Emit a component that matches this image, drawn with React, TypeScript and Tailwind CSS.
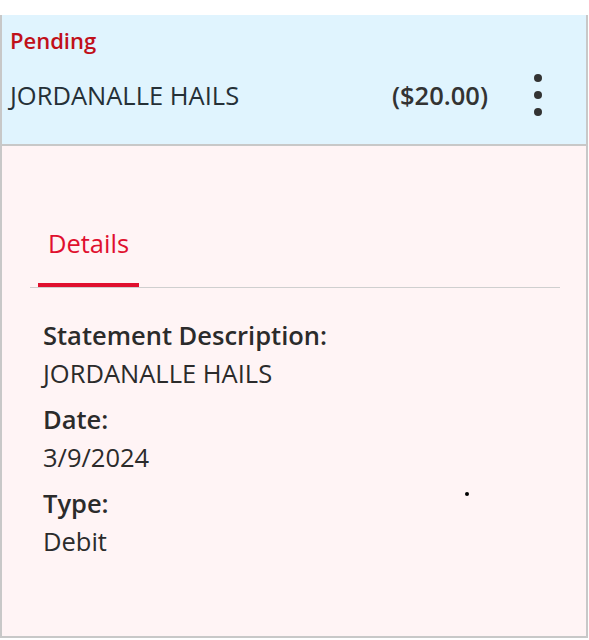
import React from 'react';

const font = { fontFamily: '"Open Sans", "Noto Sans", sans-serif' };

const DetailRow: React.FC<{ label: string; value: string }> = ({ label, value }) => (
    <div className="mb-[8px]">
        <div className="text-[25.5px] leading-[38px] font-semibold text-[#2b2b2b]">{label}</div>
        <div className="text-[25.5px] leading-[38px] text-[#2b2b2b]">{value}</div>
    </div>
);

const App: React.FC = () => {
    return (
        <div className="w-[589px] h-[640px] bg-white pt-[15px]" style={font}>
            <div className="w-[588px] h-[623px] border-2 border-[#c8c8c8] border-t-0 flex flex-col">
                <div className="h-[131px] bg-[#e0f4fe] border-b-2 border-[#c8c8c8] pl-[8px] pr-[44px] pt-[10px]">
                    <div className="text-[22px] leading-[30px] font-semibold text-[#c0101a]">Pending</div>
                    <div className="flex items-center mt-[19px]">
                        <div className="flex-1 text-[25.5px] leading-[34px] text-[#253037]">JORDANALLE HAILS</div>
                        <div className="text-[25.5px] leading-[34px] font-semibold text-[#333]">($20.00)</div>
                        <div className="ml-[46px] flex flex-col gap-[9px]">
                            <span className="block w-[8px] h-[8px] rounded-full bg-[#333]" />
                            <span className="block w-[8px] h-[8px] rounded-full bg-[#333]" />
                            <span className="block w-[8px] h-[8px] rounded-full bg-[#333]" />
                        </div>
                    </div>
                </div>
                <div className="flex-1 bg-[#fff4f5] pl-[28px] pr-[26px]">
                    <div className="mt-[78px] border-b border-[#cfcfcf] h-[64px] flex items-end">
                        <div className="ml-[8px] w-[101px] h-[64px] border-b-[4px] border-[#e0102e] flex items-start justify-center pt-[3px]">
                            <span className="text-[25.5px] leading-[34px] text-[#e0102e]">Details</span>
                        </div>
                    </div>
                    <div className="pl-[13px] pt-[28px] relative">
                        <DetailRow label="Statement Description:" value="JORDANALLE HAILS" />
                        <DetailRow label="Date:" value="3/9/2024" />
                        <DetailRow label="Type:" value="Debit" />
                        <span className="absolute left-[435px] top-[204px] w-[4px] h-[4px] rounded-full bg-black" />
                    </div>
                </div>
            </div>
        </div>
    );
};

export default App;
